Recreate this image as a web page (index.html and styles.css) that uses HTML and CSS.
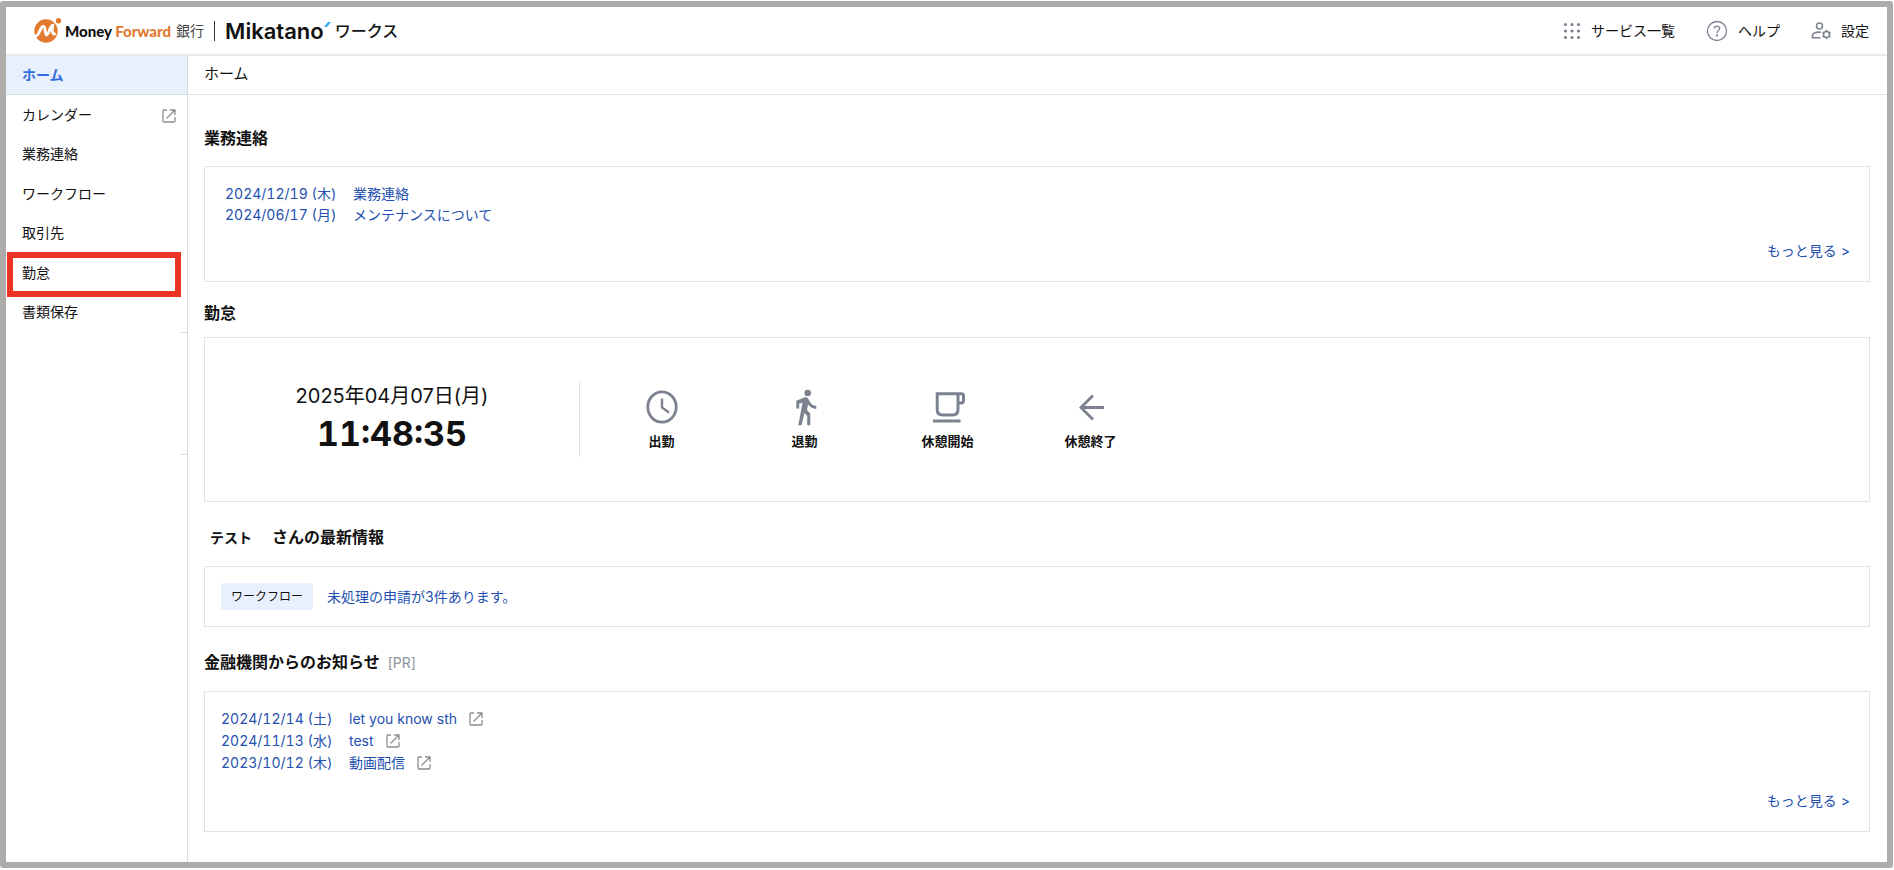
FILE: index.html
```
<!DOCTYPE html>
<html lang="ja">
<head>
    <meta charset="UTF-8">
    <title>ホーム | Mikatano ワークス</title>
    <link rel="stylesheet" href="styles.css">
</head>
<body>
    <svg class="symbols" aria-hidden="true">
        <symbol id="external" viewBox="0 0 14 14">
            <path d="M5 1H2Q1 1 1 2V12Q1 13 2 13H12Q13 13 13 12V8M8 1H13V6M13 1L4.500 9.500" fill="none" stroke="currentColor" stroke-width="1.300"/>
        </symbol>
    </svg>
    <div class="frame">
        <header class="header">
            <a class="logo" href="#">
                <svg class="logo-mark" viewBox="0 0 28 25" aria-hidden="true">
                    <circle cx="12" cy="13" r="11.700" fill="#e37a30"/>
                    <circle cx="24.500" cy="2.700" r="3.600" fill="#fff"/>
                    <circle cx="24.500" cy="2.700" r="2.700" fill="#e37a30"/>
                    <path d="M2 18C5 17.500 6.500 8.500 9.300 8.500C12 8.500 10.500 17 12.500 17C15 17 15.500 8 18.700 7.500C18 11 17.500 15.500 20.500 16" fill="none" stroke="#fff" stroke-width="2.800" stroke-linecap="round"/>
                </svg>
                <span class="logo-mf">Money <span class="logo-forward">Forward</span></span>
                <span class="logo-bank">銀行</span>
                <span class="logo-line"></span>
                <span class="logo-mikatano">Mikatano</span>
                <svg class="logo-accent" viewBox="0 0 7 6" aria-hidden="true"><path d="M0 5L4 0H7L3 5Z" fill="#36a9f5"/></svg>
                <span class="logo-works">ワークス</span>
            </a>
            <nav class="header-nav">
                <a href="#">
                    <svg width="18" height="18" viewBox="0 0 18 18" fill="#7d8290" aria-hidden="true">
                        <circle cx="2.500" cy="2.500" r="1.600"/><circle cx="9" cy="2.500" r="1.600"/><circle cx="15.500" cy="2.500" r="1.600"/>
                        <circle cx="2.500" cy="9" r="1.600"/><circle cx="9" cy="9" r="1.600"/><circle cx="15.500" cy="9" r="1.600"/>
                        <circle cx="2.500" cy="15.500" r="1.600"/><circle cx="9" cy="15.500" r="1.600"/><circle cx="15.500" cy="15.500" r="1.600"/>
                    </svg>
                    <span>サービス一覧</span>
                </a>
                <a href="#">
                    <svg width="22" height="22" viewBox="0 0 22 22" fill="none" stroke="#7d8290" stroke-width="1.300" aria-hidden="true">
                        <circle cx="11" cy="11" r="9.500"/>
                        <path d="M8.300 8.700C8.300 5.200 13.700 5.200 13.700 8.500C13.700 10.500 11 10.600 11 13.200"/>
                        <circle cx="11" cy="15.500" r=".5"/>
                    </svg>
                    <span>ヘルプ</span>
                </a>
                <a href="#">
                    <svg width="20" height="20" viewBox="0 0 20 20" fill="none" stroke="#7d8290" stroke-width="1.600" aria-hidden="true">
                        <circle cx="8.500" cy="5" r="3"/>
                        <path d="M10 11.200C5 10.800 1.500 12 1.500 14.500V16.700H9.500"/>
                        <circle cx="15.500" cy="13.500" r="3"/>
                        <path d="M15.500 8.800V10.500M15.500 16.500V18.200M11.500 11.200L13 12M18 15L19.500 15.800M11.500 15.800L13 15M18 12L19.500 11.200"/>
                    </svg>
                    <span>設定</span>
                </a>
            </nav>
        </header>
        <div class="body">
            <aside class="sidebar">
                <a class="side-home" href="#">ホーム</a>
                <ul class="side-list">
                    <li><a href="#">カレンダー <svg class="external"><use href="#external"/></svg></a></li>
                    <li><a href="#">業務連絡</a></li>
                    <li><a href="#">ワークフロー</a></li>
                    <li><a href="#">取引先</a></li>
                    <li class="marked"><a href="#">勤怠</a></li>
                    <li><a href="#">書類保存</a></li>
                </ul>
                <div class="side-handle"></div>
            </aside>
            <main class="main">
                <h1 class="page-title">ホーム</h1>
                <div class="content">
                    <h2>業務連絡</h2>
                    <section class="box notices">
                        <ul class="news">
                            <li><a href="#"><time>2024/12/19 (木)</time>業務連絡</a></li>
                            <li><a href="#"><time>2024/06/17 (月)</time>メンテナンスについて</a></li>
                        </ul>
                        <a class="more" href="#">もっと見る &gt;</a>
                    </section>

                    <h2 class="attendance-title">勤怠</h2>
                    <section class="box attendance">
                        <div class="clock">
                            <div class="clock-date">2025年04月07日(月)</div>
                            <div class="clock-time">11:48:35</div>
                        </div>
                        <div class="stamps">
                            <button type="button">
                                <svg viewBox="0 0 40 40" fill="none" stroke="#7d8290" stroke-width="2.800" aria-hidden="true">
                                    <ellipse cx="20" cy="20" rx="14.200" ry="15.200"/>
                                    <path d="M20 11.500V20.500L27 25.500" stroke-width="2.400"/>
                                </svg>
                                出勤
                            </button>
                            <button type="button">
                                <svg viewBox="0 0 40 40" fill="#7d8290" aria-hidden="true">
                                    <circle cx="22.700" cy="6" r="3.300"/>
                                    <path d="M17.500 15.700L13.300 38.300H16.600L19.400 26L22.200 29V38.300H25.300V26.500L22 23L23 17.500C25 20.300 28 21.800 31.300 21.900V18.800C28.500 18.700 26.200 17.200 25 15L23.600 12.200C22.600 10.300 21 9.800 19.300 10.400L11.300 13.800V21.500H14.200V16.400Z"/>
                                </svg>
                                退勤
                            </button>
                            <button type="button">
                                <svg viewBox="0 0 40 40" fill="none" stroke="#7d8290" stroke-width="3" aria-hidden="true">
                                    <path d="M9.200 6.700H30V22.500C30 26 28 28 24.500 28H14.700C11.200 28 9.200 26 9.200 22.500ZM30 6.700H33.500Q35.500 6.700 35.500 8.700V13.500Q35.500 16 33 16H30M5 34H32.500"/>
                                </svg>
                                休憩開始
                            </button>
                            <button type="button">
                                <svg viewBox="0 0 40 40" fill="none" stroke="#7d8290" stroke-width="2.800" aria-hidden="true">
                                    <path d="M33 20.500H10M22 8.500L10 20.500L22 32.500"/>
                                </svg>
                                休憩終了
                            </button>
                        </div>
                    </section>

                    <h2><span class="user-name">テスト</span>さんの最新情報</h2>
                    <section class="box latest">
                        <span class="badge">ワークフロー</span>
                        <a href="#">未処理の申請が3件あります。</a>
                    </section>

                    <h2>金融機関からのお知らせ<span class="pr">[PR]</span></h2>
                    <section class="box bank-news">
                        <ul class="news">
                            <li><a href="#"><time>2024/12/14 (土)</time>let you know sth<svg class="external"><use href="#external"/></svg></a></li>
                            <li><a href="#"><time>2024/11/13 (水)</time>test<svg class="external"><use href="#external"/></svg></a></li>
                            <li><a href="#"><time>2023/10/12 (木)</time>動画配信<svg class="external"><use href="#external"/></svg></a></li>
                        </ul>
                        <a class="more" href="#">もっと見る &gt;</a>
                    </section>
                </div>
            </main>
        </div>
    </div>
</body>
</html>
```
FILE: styles.css
```
*,
*::after {
    box-sizing: border-box;
}

body {
    margin: 0;
    padding: 1px 1px 2px 0;
    height: 100vh;
    font-family: Inter, "Noto Sans CJK JP", sans-serif;
    font-size: 14px;
    color: #111;
    background: #fff;
}

a {
    color: inherit;
    text-decoration: none;
}

ul {
    list-style: none;
    margin: 0;
    padding: 0;
}

.symbols {
    display: none;
}

.frame {
    display: flex;
    flex-direction: column;
    height: 100%;
    border: 6px solid #adacaa;
    border-radius: 3px;
    overflow: hidden;
}

/* ヘッダー */
.header {
    display: flex;
    flex: none;
    align-items: center;
    justify-content: space-between;
    height: 49px;
    padding: 0 18px 0 28px;
    border-bottom: 2px solid #e8eaeb;
}

.logo {
    display: flex;
    align-items: center;
    white-space: nowrap;
}

.logo-mark {
    width: 28px;
    height: 25px;
    margin-right: 3px;
}

.logo-mf {
    font-family: Lato, sans-serif;
    font-size: 15px;
    font-weight: 900;
}

.logo-forward {
    color: #e37a30;
}

.logo-bank {
    margin-left: 5px;
    font-size: 14px;
    line-height: 20px;
    color: #444;
}

.logo-line {
    width: 1px;
    height: 20px;
    margin: 0 10px;
    background: #333;
}

.logo-mikatano {
    font-size: 22px;
    font-weight: 600;
    line-height: 26px;
}

.logo-accent {
    align-self: flex-start;
    width: 7px;
    height: 6px;
    margin-top: 4px;
}

.logo-works {
    margin-left: 4px;
    font-size: 16px;
    font-weight: 500;
    line-height: 24px;
}

.header-nav {
    display: flex;
    gap: 31px;
}

.header-nav a {
    display: flex;
    align-items: center;
    gap: 10px;
}

.header-nav span {
    padding-bottom: 2px;
}

/* サイドバー */
.body {
    display: flex;
    flex: 1;
    min-height: 0;
}

.sidebar {
    flex: none;
    width: 182px;
    border-right: 1px solid #dadde0;
}

.side-home {
    display: flex;
    align-items: center;
    height: 39px;
    padding: 0 16px 2px;
    border-bottom: 1px solid #dadde0;
    background: #e9f0fd;
    color: #2f6de0;
    font-weight: 700;
}

.side-list {
    display: grid;
    grid-auto-rows: 1fr;
    height: 237px;
}

.side-list li {
    position: relative;
}

.side-list a {
    display: flex;
    align-items: center;
    justify-content: space-between;
    height: 100%;
    padding: 0 11px 2px 16px;
}

.side-list .external {
    margin-top: 4px;
}

.marked::after {
    content: "";
    position: absolute;
    top: -1px;
    left: 1px;
    right: 6px;
    height: 45px;
    border: 6px solid #ec3323;
}

.side-handle {
    width: 7px;
    height: 123px;
    margin-left: auto;
    border: solid #dadde0;
    border-width: 1px 0;
}

.external {
    width: 14px;
    height: 14px;
    color: #8a8d93;
}

/* メイン */
.main {
    flex: 1;
    min-width: 0;
    overflow: hidden;
}

.page-title {
    margin: 0;
    height: 39px;
    padding-left: 16px;
    border-bottom: 1px solid #e0e3e3;
    font-size: 15px;
    font-weight: 400;
    line-height: 36px;
}

.content {
    padding: 23px 17px 0 16px;
}

h2 {
    margin: 0;
    font-size: 16px;
    font-weight: 700;
    line-height: 24px;
    padding: 8px 0 16px;
}

.attendance-title {
    padding: 6px 0 12px;
}

.box {
    border: 1px solid #dfe3e3;
    margin-bottom: 15px;
}

.box a {
    color: #2450b0;
}

.notices {
    display: flex;
    flex-direction: column;
    justify-content: space-between;
    height: 116px;
    margin-bottom: 13px;
    padding: 16px 19px 20px 20px;
}

.news {
    line-height: 21px;
}

.news time {
    display: inline-block;
    width: 128px;
    font-variant-numeric: tabular-nums;
}

.more {
    align-self: flex-end;
    line-height: 21px;
}

.attendance {
    display: flex;
    align-items: center;
    height: 165px;
}

.clock {
    width: 375px;
    height: 75px;
    border-right: 1px solid #dfe3e3;
    text-align: center;
}

.clock-date {
    font-size: 20px;
    line-height: 28px;
}

.clock-time {
    font-size: 34px;
    font-weight: 700;
    line-height: 48px;
    font-variant-numeric: tabular-nums;
}

.stamps {
    display: flex;
    margin-left: 10px;
}

.stamps button {
    display: flex;
    flex-direction: column;
    align-items: center;
    gap: 4px;
    width: 143px;
    padding: 0 0 2px;
    border: 0;
    background: none;
    font: inherit;
    font-size: 13px;
    font-weight: 700;
    color: #111;
}

.stamps svg {
    width: 40px;
    height: 40px;
}

.user-name {
    margin: 0 20px 0 6px;
    font-size: 14px;
}

.latest {
    display: flex;
    align-items: center;
    gap: 14px;
    padding: 16px;
}

.latest a {
    padding-bottom: 2px;
}

.badge {
    padding: 0 10px;
    border-radius: 3px;
    background: #e9f0fd;
    font-size: 12px;
    line-height: 27px;
}

.pr {
    margin-left: 8px;
    font-size: 14px;
    font-weight: 400;
    color: #8e929b;
}

.bank-news {
    display: flex;
    flex-direction: column;
    justify-content: space-between;
    height: 141px;
    padding: 16px 19px 20px 16px;
}

.bank-news .news {
    line-height: 22px;
}

.bank-news .external {
    margin-left: 12px;
    vertical-align: -2px;
}
```
